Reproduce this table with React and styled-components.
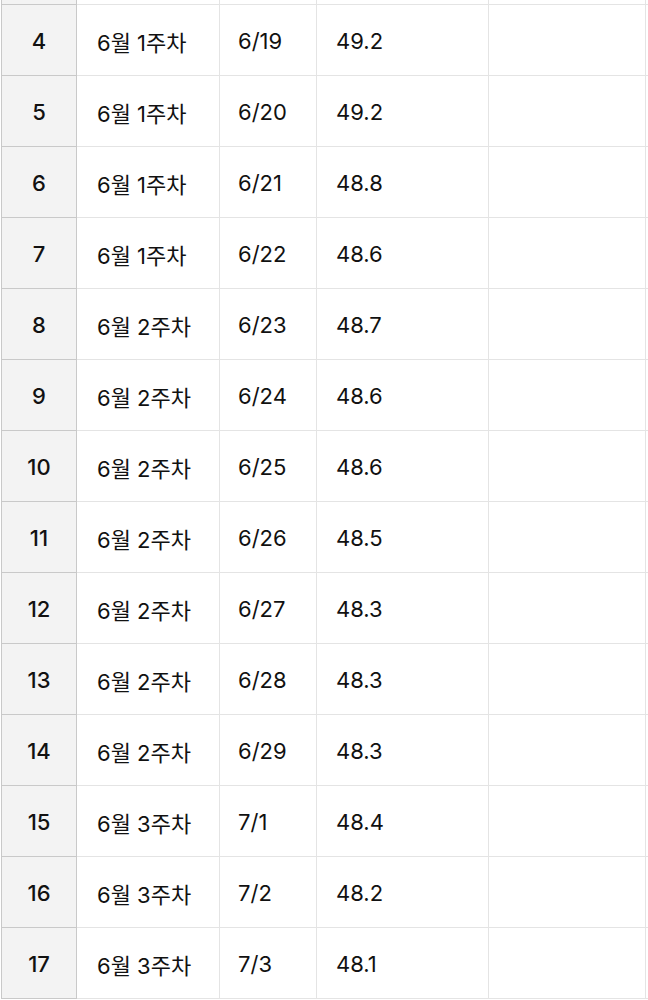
import React from 'react';
import styled, { createGlobalStyle } from 'styled-components';

const rows = [
    [4, '6월 1주차', '6/19', '49.2'],
    [5, '6월 1주차', '6/20', '49.2'],
    [6, '6월 1주차', '6/21', '48.8'],
    [7, '6월 1주차', '6/22', '48.6'],
    [8, '6월 2주차', '6/23', '48.7'],
    [9, '6월 2주차', '6/24', '48.6'],
    [10, '6월 2주차', '6/25', '48.6'],
    [11, '6월 2주차', '6/26', '48.5'],
    [12, '6월 2주차', '6/27', '48.3'],
    [13, '6월 2주차', '6/28', '48.3'],
    [14, '6월 2주차', '6/29', '48.3'],
    [15, '6월 3주차', '7/1', '48.4'],
    [16, '6월 3주차', '7/2', '48.2'],
    [17, '6월 3주차', '7/3', '48.1'],
];

const GlobalStyle = createGlobalStyle`
    html, body {
        margin: 0;
        padding: 0;
        background: #fff;
        overflow: hidden;
    }
    body {
        font-family: Inter, "Noto Sans CJK KR", sans-serif;
        color: #111;
    }
`;

const Sheet = styled.div`
    padding-left: 1px;
    width: 648px;
    height: 1000px;
    overflow: hidden;
`;

// the row just above the visible area, scrolled mostly out of view
const Row = styled.div`
    display: grid;
    grid-template-columns: 76px 143px 97px 172px 157px 1fr;
    height: ${p => (p.$clipped ? 5 : 71)}px;
`;

const RowHead = styled.div`
    display: flex;
    align-items: center;
    justify-content: center;
    background: #f3f3f3;
    border-left: 1px solid #c9c9c9;
    border-right: 1px solid #c9c9c9;
    border-bottom: 1px solid #c9c9c9;
    font-size: 22px;
    font-weight: 500;
    padding-top: 2px;
`;

const Cell = styled.div`
    display: flex;
    align-items: center;
    padding-left: ${p => p.$pad || 19}px;
    padding-top: 2px;
    border-right: 1px solid #e4e4e4;
    border-bottom: 1px solid #e4e4e4;
    font-size: 22px;
    white-space: nowrap;
    overflow: hidden;
`;

const App = () => {
    return (
        <>
            <GlobalStyle />
            <Sheet>
                <Row $clipped>
                    <RowHead />
                    <Cell />
                    <Cell />
                    <Cell />
                    <Cell />
                    <Cell />
                </Row>
                {rows.map(([n, week, date, weight]) => (
                    <Row key={n}>
                        <RowHead>{n}</RowHead>
                        <Cell $pad={20}>{week}</Cell>
                        <Cell $pad={18}>{date}</Cell>
                        <Cell>{weight}</Cell>
                        <Cell />
                        <Cell />
                    </Row>
                ))}
            </Sheet>
        </>
    );
};

export default App;
